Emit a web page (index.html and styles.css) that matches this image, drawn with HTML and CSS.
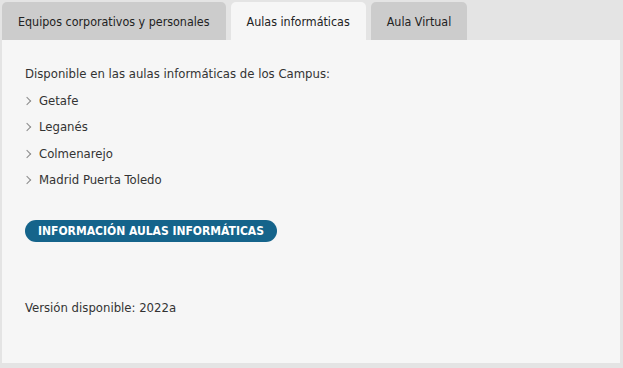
FILE: index.html
```html
<!DOCTYPE html>
<html>

<head>
    <meta charset="UTF-8">
    <title>Aulas informáticas</title>
    <link rel="stylesheet" href="styles.css">
</head>

<body>
    <div class="tabs">
        <div class="tab">Equipos corporativos y personales</div>
        <div class="tab active">Aulas informáticas</div>
        <div class="tab">Aula Virtual</div>
    </div>
    <div class="panel">
        <p class="intro">Disponible en las aulas informáticas de los Campus:</p>
        <ul class="campus">
            <li>Getafe</li>
            <li>Leganés</li>
            <li>Colmenarejo</li>
            <li>Madrid Puerta Toledo</li>
        </ul>
        <a class="btn" href="#">Información aulas informáticas</a>
        <p class="version">Versión disponible: 2022a</p>
    </div>
</body>

</html>
```

FILE: styles.css
```css
body {
    margin: 0;
    background-color: #e4e4e4;
    font-family: "DejaVu Sans Condensed", "DejaVu Sans", sans-serif;
    font-size: 13px;
    color: #333333;
    width: 623px;
    height: 368px;
}

.tabs {
    display: flex;
    gap: 5px;
    padding: 2px 0 0 2px;
    height: 38px;
}

.tab {
    background-color: #cccccc;
    border-radius: 5px 5px 0 0;
    padding: 0 16px;
    display: flex;
    align-items: center;
    color: #222222;
    font-size: 12.4px;
}

.tab.active {
    background-color: #f6f6f6;
}

.panel {
    background-color: #f6f6f6;
    margin: 0 3px 0 2px;
    height: 323px;
    padding: 0 23px;
    box-sizing: border-box;
    overflow: hidden;
}

.intro {
    margin: 0;
    padding-top: 26px;
    line-height: 16px;
}

.campus {
    list-style: none;
    margin: 0;
    padding: 6px 0 0 0;
}

.campus li {
    line-height: 16px;
    padding: 5px 0 5.3px 14px;
    position: relative;
}

.campus li::before {
    content: "";
    position: absolute;
    left: -1px;
    top: 10px;
    width: 5px;
    height: 5px;
    border-top: 1px solid #8a8a8a;
    border-right: 1px solid #8a8a8a;
    transform: rotate(45deg);
}

.btn {
    display: inline-block;
    margin-top: 27px;
    background-color: #15648b;
    color: #ffffff;
    text-decoration: none;
    text-transform: uppercase;
    font-weight: bold;
    font-size: 12px;
    border-radius: 12px;
    padding: 0 13px;
    height: 22px;
    line-height: 22px;
}

.version {
    margin: 0;
    padding-top: 58px;
    line-height: 16px;
}
```
